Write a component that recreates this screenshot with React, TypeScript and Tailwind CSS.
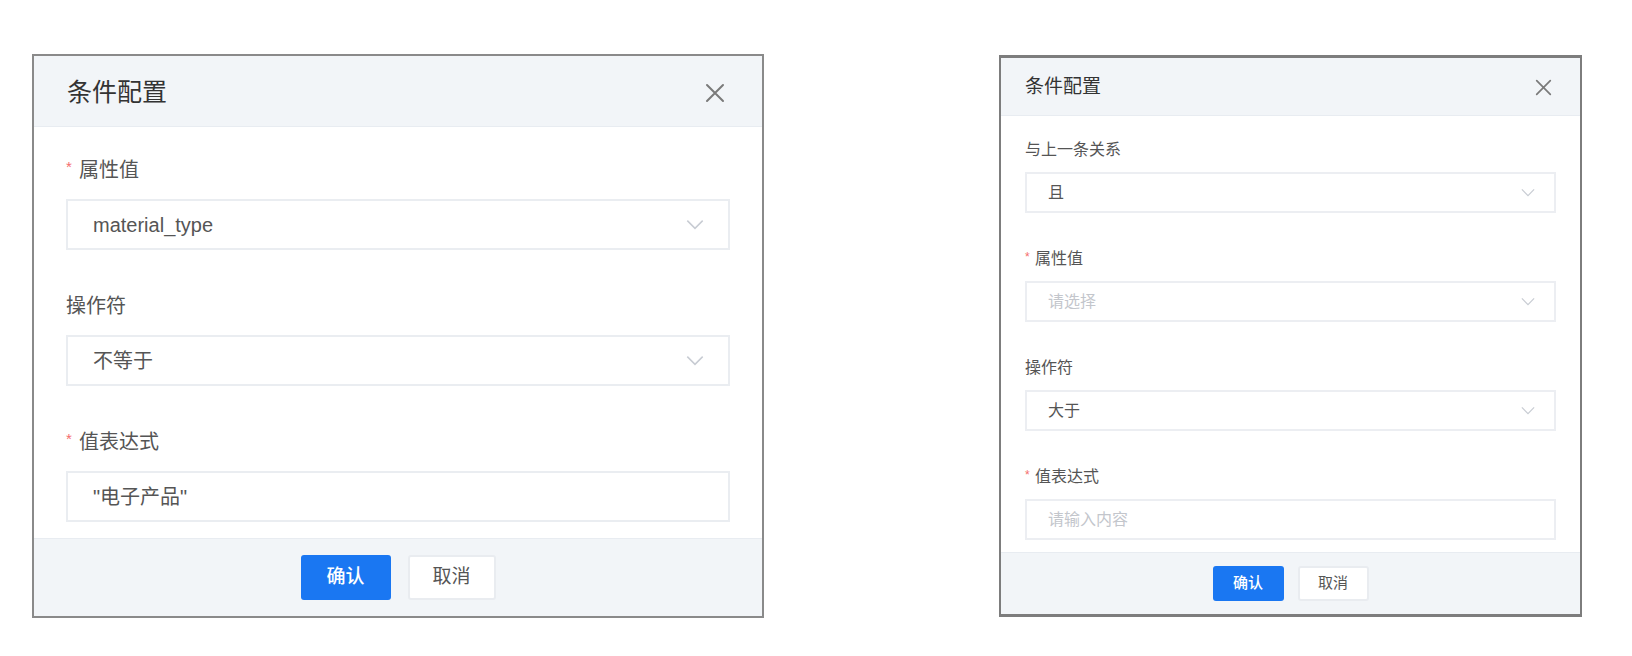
const font = 'font-["Liberation_Sans","Noto_Sans_CJK_SC",sans-serif]'

function CloseIcon({ size }: { size: number }) {
  return (
    <svg width={size} height={size} viewBox="0 0 20 20" fill="none">
      <path d="M2 2L18 18M18 2L2 18" stroke="#7a7a7a" strokeWidth="2" strokeLinecap="round" />
    </svg>
  )
}

function Chevron({ w }: { w: number }) {
  return (
    <svg width={w} height={w / 2 + 2} viewBox="0 0 16 10" fill="none">
      <path d="M1 1.5L8 8.5L15 1.5" stroke="#c8ccd3" strokeWidth="1.4" />
    </svg>
  )
}

type Field = {
  label: string
  required?: boolean
  value?: string
  placeholder?: string
  select?: boolean
}

const leftFields: Field[] = [
  { label: '属性值', required: true, value: 'material_type', select: true },
  { label: '操作符', value: '不等于', select: true },
  { label: '值表达式', required: true, value: '"电子产品"' },
]

const rightFields: Field[] = [
  { label: '与上一条关系', value: '且', select: true },
  { label: '属性值', required: true, placeholder: '请选择', select: true },
  { label: '操作符', value: '大于', select: true },
  { label: '值表达式', required: true, placeholder: '请输入内容' },
]

function LargeDialog() {
  return (
    <div className="w-[732px] flex flex-col border-2 border-[#8a8a8a] bg-white">
      {/* Header */}
      <div className="h-[71px] flex items-center justify-between pl-[33px] pr-[37px] pt-[3px] bg-[#f2f5f8] border-b border-[#e8ecf1]">
        <span className="text-[25px] text-[#333]">条件配置</span>
        <CloseIcon size={20} />
      </div>

      {/* Body */}
      <div className="pt-[28px] pb-[16px] px-[32px] flex flex-col">
        {leftFields.map((f, i) => (
          <div key={f.label} className={i < leftFields.length - 1 ? 'mb-[41px]' : ''}>
            <div className="h-[30px] flex items-center mb-[14px]">
              {f.required && <span className="text-[#f56c6c] text-[15px] mr-[4px] -mt-[6px] w-[9px]">*</span>}
              <span className="text-[20px] text-[#555]">{f.label}</span>
            </div>
            <div className="h-[51px] flex items-center justify-between pl-[25px] pr-[24px] border-2 border-[#eaedf1]">
              <span className="text-[20px] text-[#555]">{f.value}</span>
              {f.select && <Chevron w={18} />}
            </div>
          </div>
        ))}
      </div>

      {/* Footer */}
      <div className="h-[78px] flex items-center justify-center gap-[17px] bg-[#f2f5f8] border-t border-[#e8ecf1]">
        <button className="w-[90px] h-[45px] rounded-[3px] bg-[#1a77f2] text-white text-[19px] font-medium">确认</button>
        <button className="w-[88px] h-[45px] rounded-[3px] bg-white border-2 border-[#e9ecf0] text-[#555] text-[19px]">取消</button>
      </div>
    </div>
  )
}

function SmallDialog() {
  return (
    <div className="w-[583px] flex flex-col border-x-2 border-t-[3px] border-b-[3px] border-[#7d7d7d] bg-white">
      {/* Header */}
      <div className="h-[58px] flex items-center justify-between pl-[24px] pr-[28px] pt-[2px] bg-[#f2f5f8] border-b border-[#e8ecf1]">
        <span className="text-[19px] text-[#333]">条件配置</span>
        <CloseIcon size={17} />
      </div>

      {/* Body */}
      <div className="pt-[22px] pb-[12px] px-[24px] flex flex-col">
        {rightFields.map((f, i) => (
          <div key={f.label} className={i < rightFields.length - 1 ? 'mb-[34px]' : ''}>
            <div className="h-[24px] flex items-center mb-[10px]">
              {f.required && <span className="text-[#f56c6c] text-[12px] mr-[3px] -mt-[5px] w-[7px]">*</span>}
              <span className="text-[16px] text-[#555]">{f.label}</span>
            </div>
            <div className="h-[41px] flex items-center justify-between pl-[21px] pr-[19px] border-2 border-[#eceef2]">
              {f.value ? (
                <span className="text-[16px] text-[#555]">{f.value}</span>
              ) : (
                <span className="text-[16px] text-[#c3c6cc]">{f.placeholder}</span>
              )}
              {f.select && <Chevron w={14} />}
            </div>
          </div>
        ))}
      </div>

      {/* Footer */}
      <div className="h-[62px] flex items-center justify-center gap-[14px] bg-[#f2f5f8] border-t border-[#e8ecf1]">
        <button className="w-[71px] h-[35px] rounded-[3px] bg-[#1a77f2] text-white text-[15px] font-medium">确认</button>
        <button className="w-[71px] h-[35px] rounded-[3px] bg-white border-2 border-[#e9ecf0] text-[#555] text-[15px]">取消</button>
      </div>
    </div>
  )
}

export default function App() {
  return (
    <div className={`w-[1632px] h-[656px] bg-white flex items-start gap-[235px] pl-[32px] pt-[54px] ${font}`}>
      <LargeDialog />
      <div className="pt-[1px]">
        <SmallDialog />
      </div>
    </div>
  )
}
